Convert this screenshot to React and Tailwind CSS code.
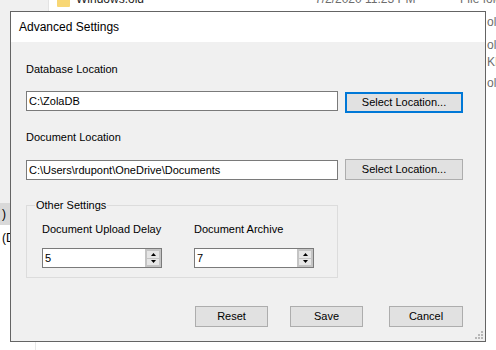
import React from "react";

const Spin = ({ value }) => (
  <div className="flex h-[20px] w-[120px] border border-[#7a7a7a] bg-white">
    <div className="flex-1 pl-[2px] text-[11px] leading-[18px]">{value}</div>
    <div className="flex w-[16px] flex-col border-2 border-[#c4c4c4] bg-[#e6e6e6]">
      <div className="flex flex-1 items-center justify-center border-b border-[#c4c4c4]">
        <svg width="5" height="3" viewBox="0 0 5 3"><path d="M2.5 0 L5 3 L0 3 Z" fill="#000" /></svg>
      </div>
      <div className="flex flex-1 items-center justify-center">
        <svg width="5" height="3" viewBox="0 0 5 3"><path d="M0 0 L5 0 L2.5 3 Z" fill="#000" /></svg>
      </div>
    </div>
  </div>
);

export default function App() {
  return (
    <div className="relative h-[350px] w-[496px] overflow-hidden bg-white text-black" style={{ fontFamily: '"Liberation Sans", Arial, sans-serif' }}>
      {/* background explorer window */}
      <div className="absolute left-0 top-0 h-[203px] w-[48px] bg-[#f0f0f0]" />
      <div className="absolute left-[48px] top-0 h-[12px] w-px bg-[#e3e3e3]" />
      <div className="absolute left-0 top-[203px] h-[22px] w-[40px] whitespace-nowrap bg-[#d9d9d9] pl-[2px] text-[12px] leading-[22px]">)</div>
      <div className="absolute left-0 top-[230px] whitespace-nowrap pl-[2px] text-[12px] leading-[16px]">(D</div>
      <div className="absolute left-[35px] top-[340px] h-[10px] w-px bg-[#e8e8e8]" />
      <div className="absolute left-[57px] top-[-3px] h-[10px] w-[13px] rounded-[1px] bg-[#f8d775]" />
      <div className="absolute left-[76px] top-[-9px] whitespace-nowrap text-[12px] leading-[16px] text-[#1e1e1e]">Windows.old</div>
      <div className="absolute left-[315px] top-[-9px] whitespace-nowrap text-[12px] leading-[16px] text-[#6d6d6d]">7/2/2020 11:23 PM</div>
      <div className="absolute left-[460px] top-[-9px] whitespace-nowrap text-[12px] leading-[16px] text-[#6d6d6d]">File folder</div>
      <div className="absolute left-[487px] top-[14px] whitespace-nowrap text-[12px] leading-[16px] text-[#6d6d6d]">ol</div>
      <div className="absolute left-[487px] top-[37px] whitespace-nowrap text-[12px] leading-[16px] text-[#6d6d6d]">ol</div>
      <div className="absolute left-[487px] top-[54px] whitespace-nowrap text-[12px] leading-[16px] text-[#6d6d6d]">KB</div>
      <div className="absolute left-[487px] top-[75px] whitespace-nowrap text-[12px] leading-[16px] text-[#6d6d6d]">ol</div>

      {/* dialog window */}
      <div className="absolute left-[10px] top-[11px] flex h-[331px] w-[476px] flex-col border border-[#646464] bg-[#f0f0f0]">
        <div className="flex h-[30px] items-center bg-white pl-[8px] text-[12px]">Advanced Settings</div>
        <div className="relative flex flex-1 flex-col pl-[15px] pr-[22px] text-[11px]">
          <div className="mt-[21px] leading-[13px]">Database Location</div>
          <div className="mt-[15px] flex items-start gap-[7px]">
            <div className="h-[20px] w-[312px] border border-[#7a7a7a] bg-white pl-[2px] leading-[18px]">C:\ZolaDB</div>
            <div className="mt-[1px] flex h-[21px] w-[118px] items-center justify-center border-2 border-[#0078d7] bg-[#e1e1e1]">Select Location...</div>
          </div>
          <div className="mt-[18px] leading-[13px]">Document Location</div>
          <div className="mt-[15px] flex items-start gap-[7px]">
            <div className="mt-[1px] h-[20px] w-[312px] border border-[#7a7a7a] bg-white pl-[2px] leading-[18px]">C:\Users\rdupont\OneDrive\Documents</div>
            <div className="flex h-[21px] w-[118px] items-center justify-center border border-[#adadad] bg-[#e1e1e1]">Select Location...</div>
          </div>
          <div className="relative mt-[25px] h-[73px] w-[312px] border border-[#dcdcdc] pl-[15px]">
            <div className="absolute left-[8px] top-[-7px] bg-[#f0f0f0] px-[1px] leading-[13px]">Other Settings</div>
            <div className="flex gap-[32px]">
              <div className="flex flex-col">
                <div className="mt-[17px] leading-[13px]">Document Upload Delay</div>
                <div className="mt-[12px]"><Spin value="5" /></div>
              </div>
              <div className="flex flex-col">
                <div className="mt-[17px] leading-[13px]">Document Archive</div>
                <div className="mt-[12px]"><Spin value="7" /></div>
              </div>
            </div>
          </div>
          <div className="mt-[28px] flex justify-end">
            <div className="flex h-[21px] w-[73px] items-center justify-center border border-[#adadad] bg-[#e1e1e1]">Reset</div>
            <div className="ml-[22px] flex h-[21px] w-[73px] items-center justify-center border border-[#adadad] bg-[#e1e1e1]">Save</div>
            <div className="ml-[26px] flex h-[21px] w-[74px] items-center justify-center border border-[#adadad] bg-[#e1e1e1]">Cancel</div>
          </div>
          <svg className="absolute bottom-[2px] right-[2px]" width="8" height="8" viewBox="0 0 8 8">
            <rect x="6" y="0" width="2" height="2" fill="#b8b8b8" />
            <rect x="3" y="3" width="2" height="2" fill="#b8b8b8" />
            <rect x="6" y="3" width="2" height="2" fill="#b8b8b8" />
            <rect x="0" y="6" width="2" height="2" fill="#b8b8b8" />
            <rect x="3" y="6" width="2" height="2" fill="#b8b8b8" />
            <rect x="6" y="6" width="2" height="2" fill="#b8b8b8" />
          </svg>
        </div>
      </div>
    </div>
  );
}
